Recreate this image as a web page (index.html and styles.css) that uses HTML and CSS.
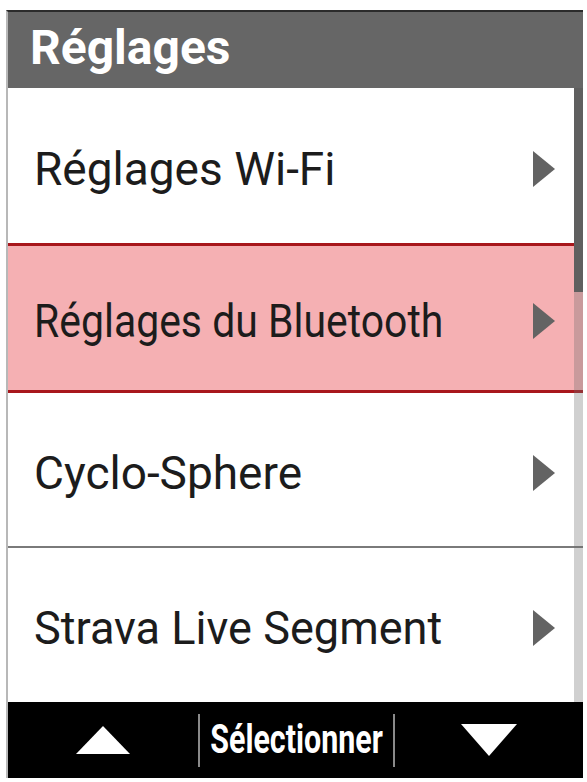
FILE: index.html
```html
<!DOCTYPE html>
<html lang="fr">
<head>
<meta charset="utf-8">
<title>Réglages</title>
<link rel="stylesheet" href="styles.css">
</head>
<body>
<div class="device">
  <div class="header"><span class="header-title">Réglages</span></div>
  <div class="list">
    <div class="row row-first">
      <span class="label">Réglages Wi-Fi</span>
      <svg class="chev" viewBox="0 0 22 36" width="22" height="36"><path d="M0 0 L22 18 L0 36 Z" fill="#636363"/></svg>
    </div>
    <div class="row row-selected">
      <span class="label label-narrow">Réglages du Bluetooth</span>
      <svg class="chev" viewBox="0 0 22 36" width="22" height="36"><path d="M0 0 L22 18 L0 36 Z" fill="#636363"/></svg>
    </div>
    <div class="row row-sep">
      <span class="label">Cyclo-Sphere</span>
      <svg class="chev" viewBox="0 0 22 36" width="22" height="36"><path d="M0 0 L22 18 L0 36 Z" fill="#636363"/></svg>
    </div>
    <div class="row row-last">
      <span class="label label-strava">Strava Live Segment</span>
      <svg class="chev" viewBox="0 0 22 36" width="22" height="36"><path d="M0 0 L22 18 L0 36 Z" fill="#636363"/></svg>
    </div>
    <div class="scrollbar"><div class="thumb"></div></div>
  </div>
  <div class="bottombar">
    <div class="cell">
      <svg viewBox="0 0 54 28" width="54" height="28"><path d="M27 0 L54 28 L0 28 Z" fill="#fff"/></svg>
    </div>
    <div class="cell cell-mid"><span class="select">Sélectionner</span></div>
    <div class="cell">
      <svg viewBox="0 0 56 32" width="56" height="32"><path d="M0 0 L56 0 L28 32 Z" fill="#fff"/></svg>
    </div>
  </div>
</div>
</body>
</html>
```

FILE: styles.css
```css
html, body {
  margin: 0;
  padding: 0;
  background: #ffffff;
}

.device {
  margin: 10px 0 0 6px;
  width: 575px;
  border-left: 2px solid #b8b8b8;
  border-top: 2px solid #2b2b2b;
  font-family: Roboto, "Noto Sans", sans-serif;
}

.header {
  height: 76px;
  background: #666666;
  display: flex;
  align-items: center;
  padding-left: 22px;
}

.header-title {
  color: #ffffff;
  font-weight: 700;
  font-size: 48px;
  line-height: 1;
  padding-bottom: 4px;
}

.list {
  position: relative;
  background: #ffffff;
}

.row {
  display: flex;
  align-items: center;
  justify-content: space-between;
  padding: 6px 28px 0 26px;
  box-sizing: border-box;
  color: #1c1c1c;
}

.row-first {
  height: 155px;
}

.row-selected {
  height: 150px;
  background: #f5b0b3;
  border-top: 3px solid #a8171c;
  border-bottom: 3px solid #a8171c;
}

.row-sep {
  height: 155px;
  border-bottom: 2px solid #7a7a7a;
}

.row-last {
  height: 154px;
}

.label {
  font-size: 46px;
  line-height: 1;
  white-space: nowrap;
}

.label-narrow {
  display: inline-block;
  transform: scaleX(0.89);
  transform-origin: left center;
}

.label-strava {
  display: inline-block;
  transform: scaleX(0.98);
  transform-origin: left center;
}

.chev {
  display: block;
  flex: none;
}

.scrollbar {
  position: absolute;
  top: 0;
  right: 0;
  bottom: 0;
  width: 9px;
  background: rgba(110, 110, 110, 0.32);
}

.thumb {
  height: 204px;
  background: #5f5f5f;
}

.bottombar {
  height: 76px;
  background: #000000;
  display: grid;
  grid-template-columns: 190px 197px 1fr;
  align-items: center;
}

.cell {
  display: flex;
  justify-content: center;
  align-items: center;
  height: 100%;
}

.cell svg {
  display: block;
}

.cell-mid {
  height: 53px;
  border-left: 2px solid #8a8a8a;
  border-right: 2px solid #8a8a8a;
  box-sizing: border-box;
}

.select {
  display: inline-block;
  color: #ffffff;
  font-weight: 700;
  font-size: 40px;
  line-height: 1;
  transform: scaleX(0.76);
  white-space: nowrap;
}
```
